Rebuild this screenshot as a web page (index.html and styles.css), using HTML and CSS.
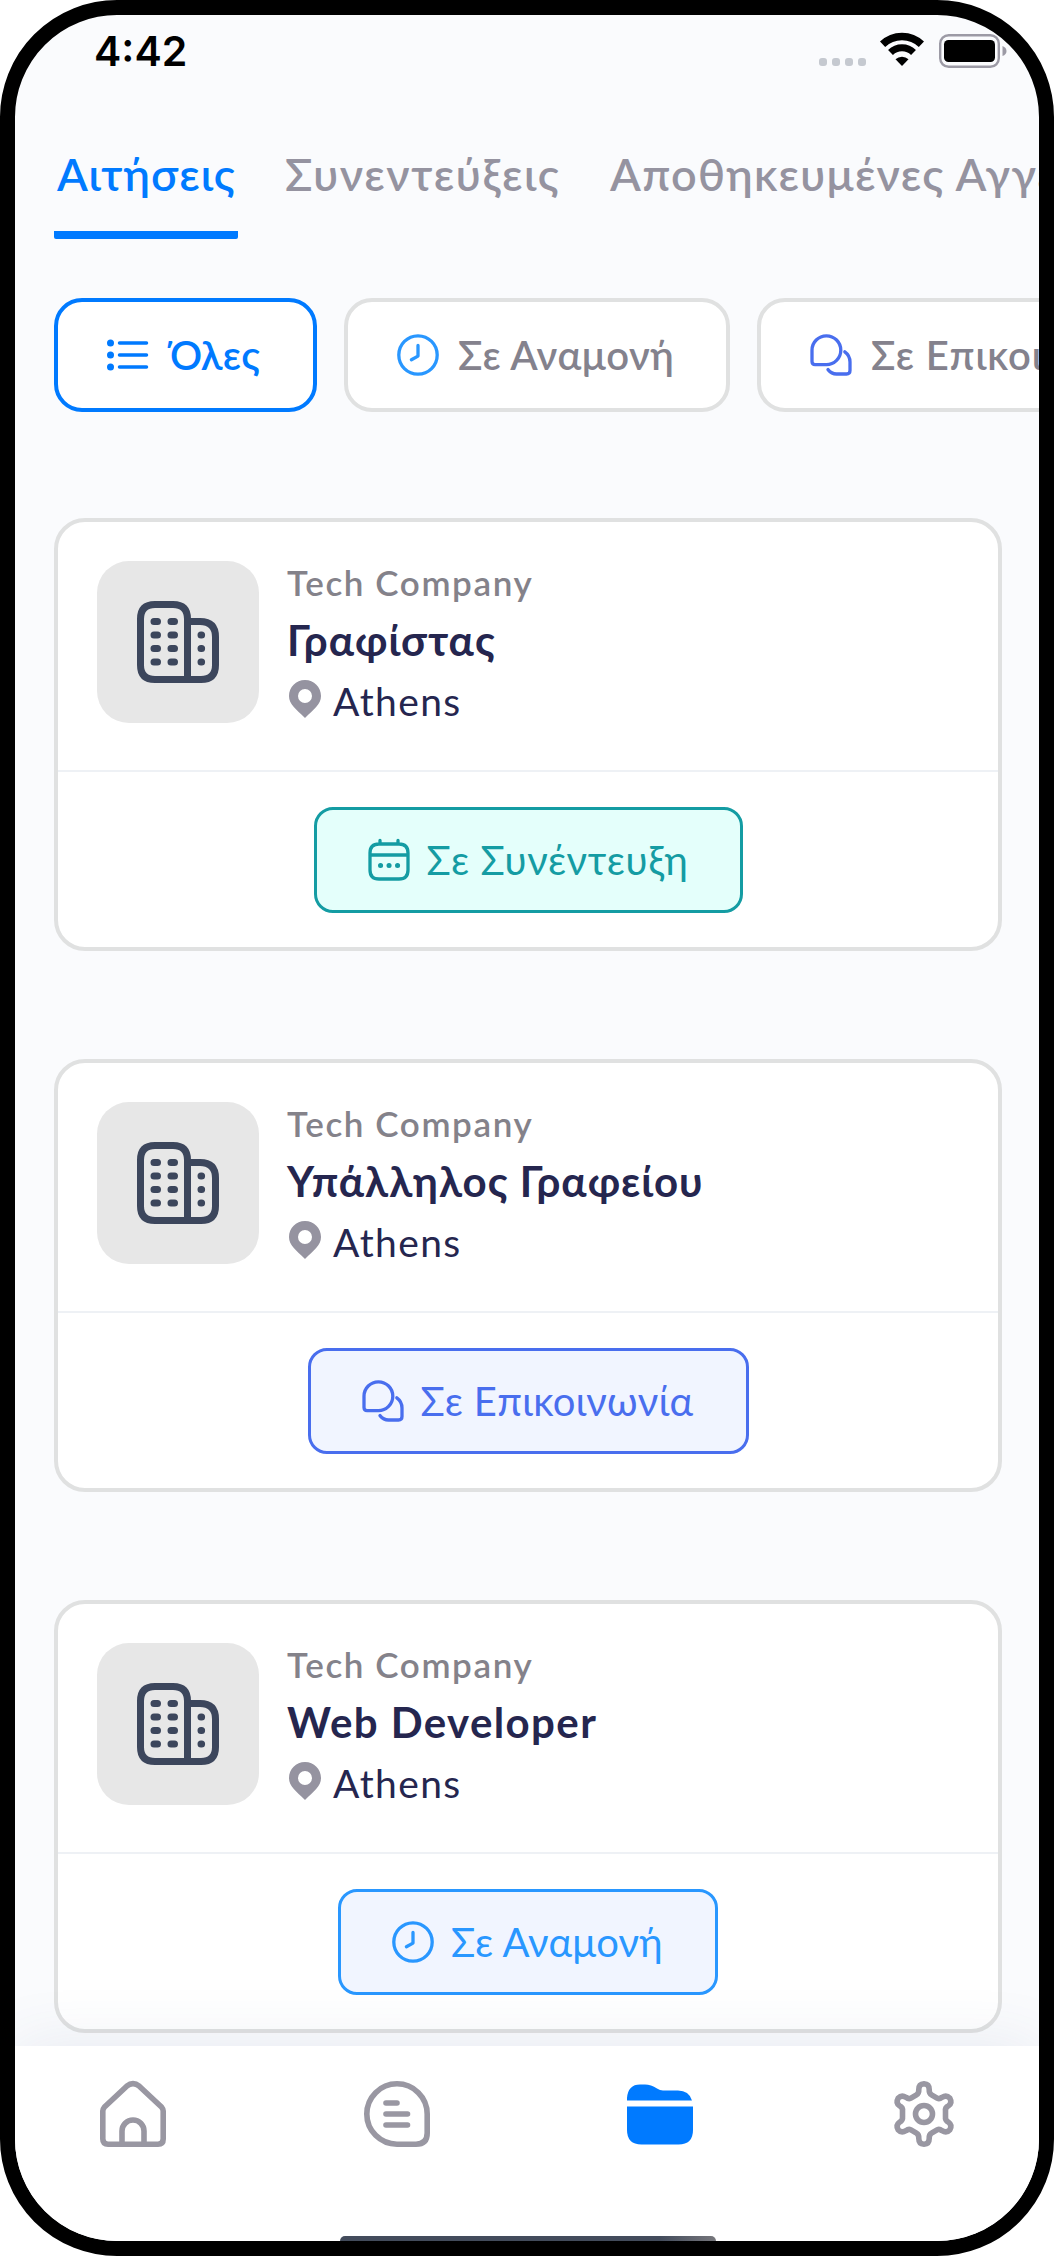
FILE: index.html
```html
<!DOCTYPE html>
<html lang="el">
<head>
  <meta charset="UTF-8">
  <title>Αιτήσεις</title>
  <link rel="stylesheet" href="styles.css">
</head>
<body>
  <!-- shared icons -->
  <svg class="sprite" width="0" height="0">
    <symbol id="clock" viewBox="0 0 42 42">
      <circle cx="21" cy="21" r="19.2"/>
      <path d="M21 11.5v10.6l-6.6 3.7"/>
    </symbol>
    <symbol id="chats" viewBox="0 0 42 42">
      <path d="M5 30.6Q2 30.6 2 27.500V16.200A14.400 14.400 0 1 1 16.400 30.600Z"/>
      <path d="M34.800 17.800Q40 21.500 40 28V36.500Q40 40 36.500 40H26.500Q21.500 40 18 35.600"/>
    </symbol>
    <symbol id="building" viewBox="0 0 82 82">
      <path d="M50.500 79V18Q50.500 3.500 36 3.500H18Q3.500 3.500 3.500 18V64Q3.500 78.500 18 78.500H64Q78.500 78.500 78.500 64V36Q78.500 20.500 63 20.500H51"/>
      <path d="M17 20.500h3.500M34 20.500h3.500M17 34h3.500M34 34h3.500M17 47.500h3.500M34 47.500h3.500M17 61h3.500M34 61h3.500M64 34h.6M64 47.500h.6M64 61h.6"/>
    </symbol>
    <symbol id="pin" viewBox="0 0 32 38">
      <path fill-rule="evenodd" d="M16 0C7 0 0 7 0 16c0 8.500 7 13 16 22 9-9 16-13.500 16-22C32 7 25 0 16 0Zm0 9a7 7 0 1 1 0 14 7 7 0 0 1 0-14Z"/>
    </symbol>
  </svg>

  <div class="phone">
    <div class="status-bar">
      <p class="time">4:42</p>
      <div class="signal"><i></i><i></i><i></i><i></i></div>
      <svg class="wifi" viewBox="0 0 44 33">
        <path d="M2.600 11.200a28 28 0 0 1 38.800 0" stroke-width="7.500"/>
        <path d="M10.500 19.400a16.500 16.500 0 0 1 23 0" stroke-width="7"/>
        <path d="M15.500 26.200a9.500 9.500 0 0 1 13 0L22 33Z" fill="#000" stroke="none"/>
      </svg>
      <svg class="battery" viewBox="0 0 69 34">
        <rect x="1.200" y="1.200" width="58.600" height="31.600" rx="8.500" fill="none" stroke="#9c9aa5" stroke-width="2.400"/>
        <rect x="5" y="6" width="51" height="22" rx="4.500"/>
        <path d="M63.500 12q4 1.500 4 5t-4 5Z" fill="#9c9aa5"/>
      </svg>
    </div>

    <div class="tabs">
      <div class="tab tab-active">Αιτήσεις</div>
      <div class="tab tab-interviews">Συνεντεύξεις</div>
      <div class="tab tab-saved">Αποθηκευμένες Αγγελίες</div>
    </div>

    <div class="chips">
      <button class="chip chip-active">
        <svg class="list-icon" viewBox="0 0 41 32">
          <path d="M12.500 4h27M12.500 16h27M12.500 28h27"/>
          <circle cx="3.500" cy="4" r="3.500"/><circle cx="3.500" cy="16" r="3.500"/><circle cx="3.500" cy="28" r="3.500"/>
        </svg>
        <span>Όλες</span>
      </button>
      <button class="chip chip-pending">
        <svg class="icon pending"><use href="#clock"/></svg>
        <span>Σε Αναμονή</span>
      </button>
      <button class="chip chip-contact">
        <svg class="icon contact"><use href="#chats"/></svg>
        <span>Σε Επικοινωνία</span>
      </button>
    </div>

    <div class="cards">
      <div class="card">
        <div class="card-main">
          <div class="logo"><svg><use href="#building"/></svg></div>
          <div class="info">
            <p class="company">Tech Company</p>
            <p class="title">Γραφίστας</p>
            <p class="place"><svg class="pin"><use href="#pin"/></svg>Athens</p>
          </div>
        </div>
        <div class="card-status">
          <div class="status interview">
            <svg class="icon" viewBox="0 0 42 42">
              <path d="M11 5H31Q40 5 40 14V31Q40 40 31 40H11Q2 40 2 31V14Q2 5 11 5ZM2 16H40M12 1.500V5M30 1.500V5"/>
              <path class="dots" d="M12.500 26.500h.1M21 26.500h.1M29.500 26.500h.1"/>
            </svg>
            <span>Σε Συνέντευξη</span>
          </div>
        </div>
      </div>

      <div class="card">
        <div class="card-main">
          <div class="logo"><svg><use href="#building"/></svg></div>
          <div class="info">
            <p class="company">Tech Company</p>
            <p class="title">Υπάλληλος Γραφείου</p>
            <p class="place"><svg class="pin"><use href="#pin"/></svg>Athens</p>
          </div>
        </div>
        <div class="card-status">
          <div class="status contact">
            <svg class="icon"><use href="#chats"/></svg>
            <span>Σε Επικοινωνία</span>
          </div>
        </div>
      </div>

      <div class="card">
        <div class="card-main">
          <div class="logo"><svg><use href="#building"/></svg></div>
          <div class="info">
            <p class="company">Tech Company</p>
            <p class="title title-latin">Web Developer</p>
            <p class="place"><svg class="pin"><use href="#pin"/></svg>Athens</p>
          </div>
        </div>
        <div class="card-status">
          <div class="status pending">
            <svg class="icon"><use href="#clock"/></svg>
            <span>Σε Αναμονή</span>
          </div>
        </div>
      </div>
    </div>

    <div class="nav">
      <svg viewBox="0 0 66 66">
        <path d="M26.700 5.200Q33 0 39.300 5.200L61.500 26Q63.200 28 63.200 30V58Q63.200 63.200 58 63.200H8Q2.800 63.200 2.800 58V30Q2.800 28 4.500 26Z"/>
        <path d="M22 63V50a11 11 0 0 1 22 0V63"/>
      </svg>
      <svg viewBox="0 0 66 66">
        <path d="M33 2.800A30.200 30.200 0 0 1 63.200 33V52Q63.200 63.200 52 63.200H33A30.200 30.200 0 0 1 33 2.800Z"/>
        <path d="M22 22h11M22 33h21.500M22 44h21.500"/>
      </svg>
      <svg class="nav-active" viewBox="0 0 66 66">
        <path d="M0 19.500V17Q1 3.500 13 3.500H18Q24 3.500 30 7.500 33 9.500 36 9.500H51Q62 9.500 65 19.500Z"/>
        <path d="M0 25.500H66V49Q66 63.500 51.500 63.500H14.500Q0 63.500 0 49Z"/>
      </svg>
      <svg viewBox="0 0 66 66">
        <circle cx="33" cy="33" r="8.500"/>
        <path d="M33 2.800Q38.200 3 38.200 8.500Q38 12.500 40.500 13.800L46.500 17.300Q48.500 18.300 51 16.300Q55.500 13.500 58.800 17.200Q61.500 22 57.500 24.800Q54 26.500 54.500 30V36Q54 39.500 57.500 41.200Q61.500 44 58.800 48.800Q55.500 52.500 51 49.700Q48.500 47.700 46.500 48.700L40.500 52.200Q38 53.500 38.200 57.500Q38.200 63 33 63.200Q27.800 63 27.800 57.500Q28 53.500 25.500 52.200L19.500 48.700Q17.500 47.700 15 49.700Q10.500 52.500 7.200 48.800Q4.500 44 8.500 41.200Q12 39.500 11.500 36V30Q12 26.500 8.500 24.800Q4.500 22 7.200 17.200Q10.500 13.500 15 16.300Q17.500 18.300 19.500 17.300L25.500 13.800Q28 12.500 27.800 8.500Q27.800 3 33 2.800Z"/>
      </svg>
      <div class="home-bar"></div>
    </div>
  </div>
</body>
</html>
```
FILE: styles.css
```css
*{
  box-sizing: border-box;
}
body{
  margin: 0;
  background-color: white;
  font-family: Lato, "Open Sans", sans-serif;
}
p{
  margin: 0;
}
svg{
  flex-shrink: 0;
  overflow: visible;
}
.sprite{
  display: none;
}
.phone{
  display: flex;
  flex-direction: column;
  width: 1054px;
  height: 2256px;
  border: 15px solid black;
  border-radius: 117px;
  background-color: #fafbfd;
  overflow: hidden;
}

.status-bar{
  display: flex;
  flex-shrink: 0;
  align-items: flex-start;
  height: 113px;
  padding: 18px 0 0 79px;
}
.time{
  font-family: Inter, sans-serif;
  font-size: 41px;
  font-weight: 600;
  line-height: 37px;
  width: 725px;
}
.signal{
  display: flex;
  gap: 5px;
  padding-top: 25px;
  width: 61px;
}
.signal i{
  width: 8px;
  height: 8px;
  border-radius: 3px;
  background-color: #c5c9d0;
}
.wifi{
  width: 44px;
  height: 33px;
  margin-right: 15px;
  fill: none;
  stroke: black;
}
.battery{
  width: 69px;
  height: 34px;
  margin-top: 1px;
}

.tabs{
  display: flex;
  flex-shrink: 0;
  height: 111px;
  margin-left: 39px;
  font-size: 45px;
  font-weight: 600;
  line-height: 65px;
  color: #9593a0;
  white-space: nowrap;
}
.tab{
  flex-shrink: 0;
  padding: 14px 3px 0;
}
.tab-active{
  width: 184px;
  margin-right: 44px;
  letter-spacing: 1px;
  color: #007aff;
  border-bottom: 8px solid #007aff;
  border-radius: 2px;
}
.tab-interviews{
  width: 325px;
  letter-spacing: 1.6px;
}
.tab-saved{
  letter-spacing: 1.3px;
}

.chips{
  display: flex;
  flex-shrink: 0;
  gap: 27px;
  margin: 59px 0 0 39px;
}
.chip{
  display: flex;
  align-items: center;
  flex-shrink: 0;
  height: 114px;
  padding: 0 0 0 49px;
  border: 4px solid #e0e1e1;
  border-radius: 28px;
  background-color: white;
  color: #84828d;
  font-family: inherit;
  font-size: 40px;
  font-weight: 600;
  letter-spacing: 0.5px;
  white-space: nowrap;
}
.chip-active{
  width: 263px;
  border-color: #007aff;
  color: #007aff;
}
.chip-pending{
  width: 386px;
}
.chip-contact{
  width: 440px;
  letter-spacing: 0.9px;
}
.list-icon{
  width: 41px;
  height: 32px;
  margin-right: 22px;
  fill: #007aff;
  stroke: #007aff;
  stroke-linecap: round;
}
.list-icon path{
  stroke-width: 3.5;
}
.list-icon circle{
  stroke: none;
}
.icon{
  width: 42px;
  height: 42px;
  margin-right: 19px;
  fill: none;
  stroke: currentColor;
  stroke-width: 3.3;
  stroke-linecap: round;
  stroke-linejoin: round;
}
.dots{
  stroke-width: 5;
}

.pending{
  color: #2997ff;
}
.contact{
  color: #496eee;
}
.interview{
  color: #149ca3;
}

.cards{
  display: flex;
  flex-direction: column;
  gap: 108px;
  flex-shrink: 0;
  height: 1634px;
  padding: 106px 37px 0 39px;
}
.card{
  flex-shrink: 0;
  height: 433px;
  border: 4px solid #e0e1e1;
  border-radius: 31px;
  background-color: white;
}
.card-main{
  display: flex;
  align-items: flex-start;
  height: 250px;
  padding: 32px 39px 0;
  border-bottom: 2px solid #eef1f5;
}
.logo{
  display: flex;
  align-items: center;
  justify-content: center;
  width: 162px;
  height: 162px;
  margin: 7px 28px 0 0;
  border-radius: 32px;
  background-color: #e7e7e7;
}
.logo svg{
  width: 82px;
  height: 82px;
  fill: none;
  stroke: #3c465c;
  stroke-width: 7;
  stroke-linecap: round;
}
.company{
  font-size: 35px;
  font-weight: 600;
  line-height: 57px;
  letter-spacing: 1.6px;
  color: #84828a;
}
.title{
  font-size: 42px;
  font-weight: 700;
  line-height: 58px;
  letter-spacing: 1px;
  color: #25264f;
}
.title-latin{
  letter-spacing: 1.4px;
}
.place{
  display: flex;
  align-items: center;
  font-size: 39px;
  line-height: 64px;
  letter-spacing: 1.4px;
  color: #25264f;
}
.pin{
  width: 32px;
  height: 38px;
  margin: 0 12px 4px 2px;
  fill: #9593a0;
}
.card-status{
  display: flex;
  justify-content: center;
  padding-top: 35px;
}
.status{
  display: flex;
  align-items: center;
  height: 106px;
  padding-left: 51px;
  border: 3px solid currentColor;
  border-radius: 19px;
  background-color: #f1f5ff;
  font-size: 40px;
  letter-spacing: 0.4px;
  white-space: nowrap;
}
.status .icon{
  margin-right: 17px;
}
.status.interview{
  width: 429px;
  letter-spacing: 0.6px;
  background-color: #e4fffb;
}
.status.contact{
  width: 441px;
}
.status.pending{
  width: 380px;
  letter-spacing: 0.2px;
}

.nav{
  position: relative;
  display: flex;
  flex-shrink: 0;
  justify-content: space-between;
  align-items: flex-start;
  height: 195px;
  padding: 35px 82px 0 85px;
  background-color: white;
  box-shadow: 0 0 60px rgba(60, 80, 130, 0.1);
}
.nav svg{
  width: 66px;
  height: 66px;
  fill: none;
  stroke: #9997a2;
  stroke-width: 5.6;
  stroke-linecap: round;
  stroke-linejoin: round;
}
.nav .nav-active{
  fill: #007aff;
  stroke: none;
}
/* peeks out over the bottom edge of the frame */
.home-bar{
  position: absolute;
  left: 325px;
  bottom: 0;
  width: 376px;
  height: 5px;
  border-radius: 7px 7px 0 0;
  background: linear-gradient(to right, #434c5c 85%, #77777c);
}
```
